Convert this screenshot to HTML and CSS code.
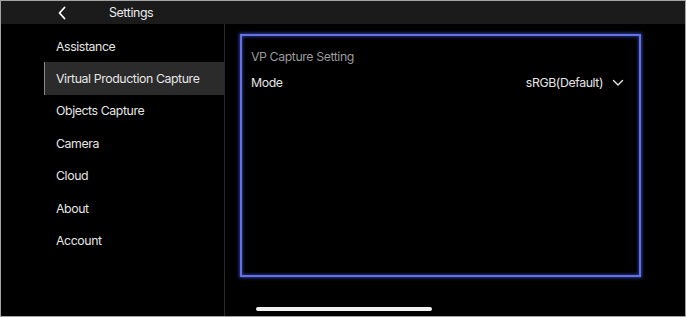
FILE: index.html
```html
<!DOCTYPE html>
<html>
<head>
<meta charset="utf-8">
<link rel="stylesheet" href="styles.css">
</head>
<body>
<div class="screen">
  <header class="topbar">
    <svg class="back" width="10" height="14" viewBox="0 0 10 14"><path d="M7.5 1.5 L2.5 7 L7.5 12.5" fill="none" stroke="#fff" stroke-width="1.8" stroke-linecap="round" stroke-linejoin="round"/></svg>
    <span class="title">Settings</span>
  </header>
  <div class="main">
    <nav class="sidebar">
      <div class="item">Assistance</div>
      <div class="item active">Virtual Production Capture</div>
      <div class="item">Objects Capture</div>
      <div class="item">Camera</div>
      <div class="item">Cloud</div>
      <div class="item">About</div>
      <div class="item">Account</div>
    </nav>
    <section class="content">
      <div class="panel">
        <div class="panel-title">VP Capture Setting</div>
        <div class="row">
          <span class="label">Mode</span>
          <span class="value">sRGB(Default)
            <svg class="chev" width="12" height="8" viewBox="0 0 12 8"><path d="M1.5 1.5 L6 6 L10.5 1.5" fill="none" stroke="#e6e6e6" stroke-width="1.4" stroke-linecap="round" stroke-linejoin="round"/></svg>
          </span>
        </div>
      </div>
    </section>
  </div>
  <div class="home-indicator"></div>
</div>
</body>
</html>
```

FILE: styles.css
```css
* { box-sizing: border-box; }
html, body { margin: 0; padding: 0; background: #000; }
body {
  font-family: Inter, "Liberation Sans", Arial, sans-serif;
  color: #e8e8e8;
}
.screen {
  position: relative;
  width: 686px;
  height: 317px;
  border: 1px solid #a3a3a3;
  background: #000;
  display: flex;
  flex-direction: column;
  overflow: hidden;
}
.topbar {
  height: 23px;
  flex: none;
  background: #1b1b1b;
  display: flex;
  align-items: center;
  padding-left: 56px;
}
.back { display: block; }
.title {
  margin-left: 42px;
  font-size: 12.4px;
  color: #ececec;
  letter-spacing: -0.4px;
}
.main {
  flex: 1;
  display: flex;
}
.sidebar {
  width: 224px;
  flex: none;
  border-right: 1px solid #2a2a2a;
  padding-top: 6px;
}
.item {
  height: 32.4px;
  margin-left: 43px;
  padding-left: 11px;
  border-left: 1px solid transparent;
  display: flex;
  align-items: center;
  font-size: 12.3px;
  color: #e6e6e6;
  letter-spacing: -0.4px;
}
.item.active {
  background: #2b2b2b;
  border-left-color: #8a8a8a;
}
.content {
  flex: 1;
  padding: 10px 0 0 15px;
}
.panel {
  width: 401px;
  height: 243px;
  border: 2px solid #6272e6;
  box-shadow: 0 0 3px 1px rgba(70, 90, 220, 0.65), inset 0 0 3px 1px rgba(70, 90, 220, 0.55);
  padding: 13px 15px 0 9px;
}
.panel-title {
  font-size: 12.3px;
  color: #9a9a9a;
  letter-spacing: -0.4px;
  line-height: 16px;
}
.row {
  margin-top: 10px;
  display: flex;
  justify-content: space-between;
  align-items: center;
  font-size: 12.3px;
  line-height: 16px;
  color: #e6e6e6;
  letter-spacing: -0.4px;
}
.value {
  display: flex;
  align-items: center;
}
.chev { margin-left: 9px; display: block; }
.home-indicator {
  position: absolute;
  left: 255px;
  top: 306px;
  width: 176px;
  height: 4px;
  border-radius: 2px;
  background: #f2f2f2;
}
```
